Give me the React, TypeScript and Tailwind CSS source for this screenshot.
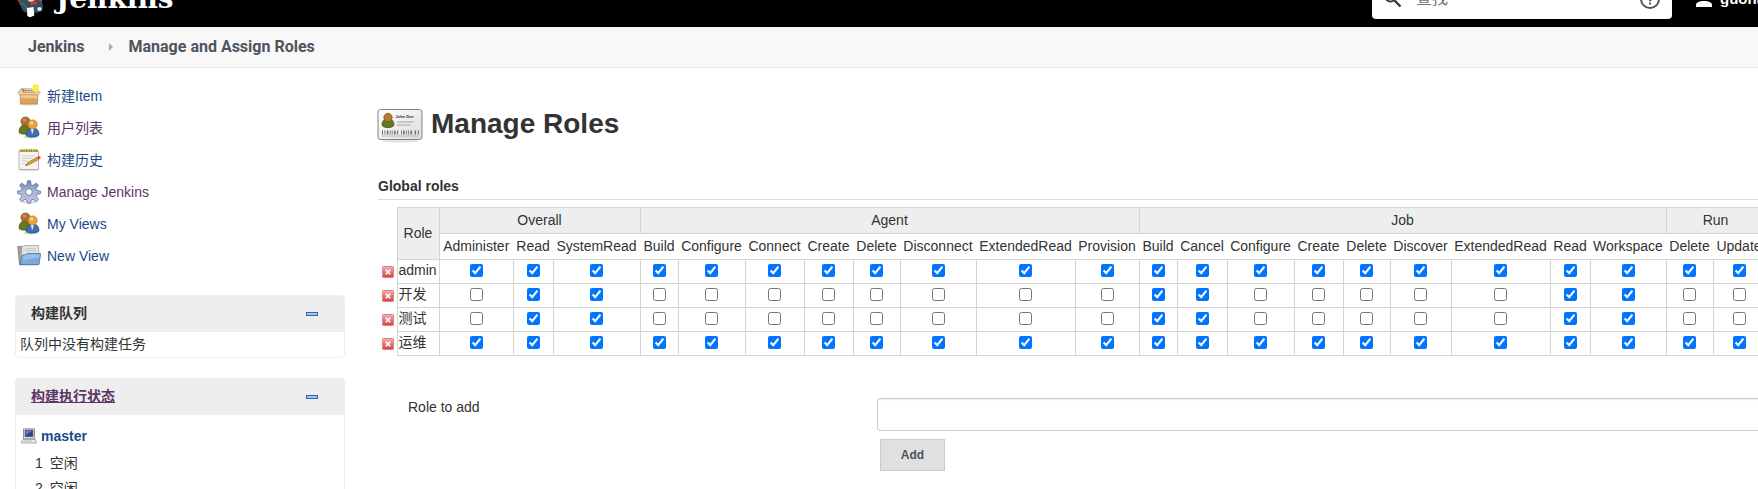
import { useId, useState, type ReactNode } from "react";

const groups = [
  { name: "Overall", permissions: ["Administer", "Read", "SystemRead"] },
  {
    name: "Agent",
    permissions: ["Build", "Configure", "Connect", "Create", "Delete", "Disconnect", "ExtendedRead", "Provision"],
  },
  {
    name: "Job",
    permissions: ["Build", "Cancel", "Configure", "Create", "Delete", "Discover", "ExtendedRead", "Read", "Workspace"],
  },
  { name: "Run", permissions: ["Delete", "Update"] },
];

const columnWidths: Record<string, string> = {
  Administer: "w-[74px]",
  Read: "w-[40px]",
  SystemRead: "w-[87px]",
  Build: "w-[38px]",
  Configure: "w-[67px]",
  Connect: "w-[59px]",
  Create: "w-[49px]",
  Delete: "w-[47px]",
  Disconnect: "w-[76px]",
  ExtendedRead: "w-[99px]",
  Provision: "w-[64px]",
  Cancel: "w-[50px]",
  Discover: "w-[61px]",
  Workspace: "w-[76px]",
  Update: "w-[52px]",
};

const permissions = groups.flatMap((g) => g.permissions.map((p) => `${g.name}/${p}`));
const developer = ["Overall/Read", "Overall/SystemRead", "Job/Build", "Job/Cancel", "Job/Read", "Job/Workspace"];

const initialRoles: { name: string; granted: string[] }[] = [
  { name: "admin", granted: permissions },
  { name: "开发", granted: developer },
  { name: "测试", granted: developer },
  { name: "运维", granted: permissions },
];

function BoxIcon() {
  return (
    <svg viewBox="0 0 24 24" className="size-6" aria-hidden="true">
      <ellipse cx="12" cy="20.500" rx="10" ry="1.200" fill="#ddd" />
      <path d="M4.500 4.500h15L21 10H3z" fill="#b98242" />
      <path d="M7.500 5h10v3h-10z" fill="#d9d5cc" />
      <path d="M8 6.500h9" stroke="#777" strokeWidth="1" strokeDasharray="2 1" />
      <path d="M3 10h18l-.5 10h-17z" fill="#dba45c" stroke="#bb8643" strokeWidth=".7" />
      <path d="M3.500 10.300h17l-.2 4H3.700z" fill="#edc88f" />
      <path d="M4.500 4.500.8 8.500 3 10.800h18l2.300-2.300-3.800-4L18 8.300H6.500z" fill="#f0cf9b" stroke="#bb8643" strokeWidth=".6" />
      <circle cx="18.500" cy="3.800" r="3.800" fill="#fdf58a" />
      <circle cx="18.500" cy="3.800" r="2.500" fill="#fbe611" />
      <circle cx="18.500" cy="3.800" r="1.100" fill="#fffbd0" />
    </svg>
  );
}

function PeopleIcon() {
  return (
    <svg viewBox="0 0 24 24" className="size-6" aria-hidden="true">
      <ellipse cx="14" cy="21" rx="8" ry="1.300" fill="#ddd" />
      <path d="M2 16.500c0-5 2-7.500 6-7.500s6 2.500 6 7c-2 2.500-10 3-12 .5z" fill="#65791f" stroke="#47560f" strokeWidth=".7" />
      <circle cx="8.500" cy="5.500" r="4.500" fill="#a86f28" stroke="#76501c" strokeWidth=".7" />
      <circle cx="7.500" cy="4" r="1.800" fill="#c99450" />
      <path d="M9 19.500c0-5 2-7.500 6.500-7.500s6.500 2.500 6.500 7c-2 2.500-11 3-13 .5z" fill="#3c6eb0" stroke="#224b86" strokeWidth=".7" />
      <path d="m13.500 12 1.800 6.500L17 12z" fill="#f4f4f4" />
      <circle cx="15.500" cy="8.500" r="4.600" fill="#eda238" stroke="#b87414" strokeWidth=".7" />
      <circle cx="14.500" cy="7" r="2" fill="#f8cb80" />
    </svg>
  );
}

function NotepadIcon() {
  return (
    <svg viewBox="0 0 24 24" className="size-6" aria-hidden="true">
      <ellipse cx="12" cy="22" rx="10" ry="1.300" fill="#ddd" />
      <path d="M2 3h19.500v18.500H2z" fill="#f4f4f2" stroke="#a9a9a5" strokeWidth=".9" />
      <path d="M2.500 1.500h18.500v2.500H2.500z" fill="#c2b44a" />
      <path d="M4.500 1v3M7 1v3M9.500 1v3M12 1v3M14.500 1v3M17 1v3M19.500 1v3" stroke="#7d712a" strokeWidth=".7" />
      <path d="M5 8h12M5 10.500h10M5 13h6M5 15.500h3" stroke="#cbcbcb" strokeWidth="1" />
      <path d="m8.500 17.500 2.500-3L20.500 9l1.300 2.200-9.600 5.400z" fill="#dfa244" stroke="#8d6123" strokeWidth=".7" />
      <path d="m20.300 9 1.500-.9q2 .3 2 2.200l-2 1z" fill="#e0442f" />
      <path d="m8.500 17.500 1-1.300.8.800z" fill="#222" />
    </svg>
  );
}

function GearIcon() {
  return (
    <svg viewBox="0 0 24 24" className="size-6" aria-hidden="true">
      <defs>
        <linearGradient id="gear" x1="0" y1="0" x2="0" y2="1">
          <stop offset="0" stopColor="#6d80ae" />
          <stop offset=".45" stopColor="#aab5d4" />
          <stop offset="1" stopColor="#c4c2e4" />
        </linearGradient>
      </defs>
      <ellipse cx="12" cy="22" rx="8" ry="1.500" fill="#ddd" />
      <path
        fillRule="evenodd"
        fill="url(#gear)"
        stroke="#6673a0"
        strokeWidth=".8"
        strokeLinejoin="round"
        d="M10.500.8h3l.6 3.900 2 .8 3.200-2.400 2.200 2.200-2.400 3.200.8 2 3.600.6v2.600l-3.600.6-.8 2 2.400 3.200-2.200 2.200-3.200-2.400-2 .8-.6 3.100h-3l-.6-3.100-2-.8-3.200 2.400-2.200-2.200 2.400-3.200-.8-2-3.600-.6v-2.600l3.600-.6.8-2-2.400-3.200 2.200-2.200 3.200 2.400 2-.8zM12 8.700a3.300 3.300 0 1 0 0 6.600 3.300 3.300 0 0 0 0-6.600z"
      />
    </svg>
  );
}

function FolderIcon() {
  return (
    <svg viewBox="0 0 24 24" className="size-6" aria-hidden="true">
      <ellipse cx="12" cy="21" rx="10" ry="1.200" fill="#ddd" />
      <path d="M.8 2.500h5L7 4v16.500H2.500z" fill="#a2a2a2" stroke="#6f6f6f" strokeWidth=".7" />
      <path d="M4.800 2.500 8 1.500h13.700V18H4z" fill="#e2e2e2" stroke="#9b9b9b" strokeWidth=".7" />
      <path d="M9 4.500h10M8 6.500h11" stroke="#c6c6c6" strokeWidth=".9" />
      <path d="m5.500 11 3.500-.3 1-1.200h13.700L22 20.500H2.800z" fill="#7fa9dc" stroke="#4672aa" strokeWidth=".8" />
      <path d="M6.200 11.700 9.500 11.300l1-1H22.500l-.5 3.500c-6 0-9 2-16.800 2z" fill="#9bbde8" />
    </svg>
  );
}

function ComputerIcon() {
  return (
    <svg viewBox="0 0 16 16" className="size-4" aria-hidden="true">
      <path d="M2.500.8h11v10h-11z" fill="#deded8" stroke="#888" strokeWidth=".9" />
      <path d="M4.200 2.300h7.600v6.200H4.200z" fill="#2d4a86" stroke="#1b2d58" strokeWidth=".6" />
      <path d="M4.700 2.800h6.500L4.700 7z" fill="#6682b8" />
      <path d="M1.500 11.500h13l1 3.500H.5z" fill="#e9e9e4" stroke="#999" strokeWidth=".8" />
      <path d="M3 13h8" stroke="#aaa" strokeWidth=".8" />
    </svg>
  );
}

function CardIcon() {
  return (
    <svg viewBox="0 0 48 48" className="size-12" aria-hidden="true">
      <defs>
        <linearGradient id="card" x1="0" y1="0" x2="1" y2="1">
          <stop offset="0" stopColor="#fff" />
          <stop offset="1" stopColor="#dcdcdc" />
        </linearGradient>
      </defs>
      <ellipse cx="24" cy="38.500" rx="18" ry="2" fill="#e2e2e2" />
      <rect x="2" y="7.500" width="44" height="30" rx="2.500" fill="url(#card)" stroke="#858585" />
      <path d="M6 23c0-4 2-6 6-6s6 2 6 6c-1 3.500-11 3.500-12 0z" fill="#64781f" stroke="#414f10" strokeWidth=".7" />
      <circle cx="12" cy="15.500" r="4.200" fill="#b57b33" stroke="#7b521c" strokeWidth=".7" />
      <text x="19.500" y="16" fontSize="4" fontWeight="700" fill="#333" fontFamily="Liberation Sans, sans-serif">John Doe</text>
      <path d="M21 20h17M21 23h13.500" stroke="#bcbcbc" strokeWidth="1.600" />
      <path d="M6 30.500h1m1.500 0h.8m1.500 0h1.500m1.500 0h.8m1.200 0h.8m1.500 0h1.500m1.500 0h1m3 0h.8m1.200 0h1.500m1.500 0h.8m1.200 0h.8m1.500 0h1.500m2.700 0h1.300m1.900 0h1" stroke="#666" strokeWidth="4" />
      <path d="M6 34h36" stroke="#999" strokeWidth=".9" strokeDasharray="1.500 .8" />
    </svg>
  );
}

function JenkinsLogo() {
  return (
    <svg viewBox="0 0 30 40" className="h-10 w-[30px]" aria-hidden="true">
      <circle cx="14" cy="17" r="13" fill="#d33833" />
      <path d="M5 14C5 6 9 2 14 2s9 5 9 12c0 5-3 8-8 9-6 0-10-3-10-9z" fill="#f0d6b7" />
      <path d="M3.500 21c2-2 5-2 8 0l3.500 3 5-4 6 3c1.500 3 1 6 0 9-3 1.500-5 1.500-8 2-5 0-8 0-11-2-2-3-3.500-7-3.500-11z" fill="#335061" />
      <path d="m14 22 3 1.500 3.500-2 .5 4-3-.5-3 1.500z" fill="#d33833" />
      <path d="M5 24c3 1 5 3 6 6" fill="none" stroke="#6d8793" strokeWidth=".8" />
      <path d="m11 29 6.500-1 .8 8.500-4.300 1.700-2.700-1.200z" fill="#fff" />
      <path d="M21 28.500c3-1.500 5-.5 5 1.500s-2.500 3-5 1.500z" fill="#e7e7e5" stroke="#1e2d36" strokeWidth=".6" />
    </svg>
  );
}

function DeleteIcon() {
  return (
    <svg viewBox="0 0 12 12" className="size-3" aria-hidden="true">
      <defs>
        <linearGradient id="delete" x1="0" y1="0" x2="0" y2="1">
          <stop offset="0" stopColor="#edb4b4" />
          <stop offset="1" stopColor="#d94040" />
        </linearGradient>
      </defs>
      <rect x=".5" y=".5" width="11" height="11" rx=".8" fill="url(#delete)" stroke="#dc8484" />
      <path d="m3.800 3.800 4.400 4.400m0-4.400L3.800 8.200" stroke="#fff" strokeWidth="1.600" />
    </svg>
  );
}

const tasks = [
  { label: "新建Item", icon: <BoxIcon />, color: "text-[#204a87]" },
  { label: "用户列表", icon: <PeopleIcon />, color: "text-[#5c3566]" },
  { label: "构建历史", icon: <NotepadIcon />, color: "text-[#204a87]" },
  { label: "Manage Jenkins", icon: <GearIcon />, color: "text-[#5c3566]" },
  { label: "My Views", icon: <PeopleIcon />, color: "text-[#204a87]" },
  { label: "New View", icon: <FolderIcon />, color: "text-[#204a87]" },
];

function Header() {
  return (
    <header className="flex h-[27px] items-end overflow-hidden bg-black">
      <div className="flex h-14 w-full shrink-0 items-center">
        <a href="#home" className="ml-4 flex items-center gap-2.5 text-white">
          <JenkinsLogo />
          <span className="font-['DejaVu_Serif',serif] text-[28px] leading-8 font-bold">Jenkins</span>
        </a>
        <label className="ml-auto flex h-10 w-[300px] items-center rounded bg-white px-3">
          <svg viewBox="0 0 18 18" className="size-[18px]" fill="none" stroke="#333" strokeWidth="2" aria-hidden="true">
            <circle cx="6.500" cy="6.500" r="5" />
            <path d="m10.500 10.500 6 6" strokeWidth="2.300" />
          </svg>
          <input aria-label="查找" placeholder="查找" className="ml-3.5 min-w-0 flex-1 text-base outline-none placeholder:text-[#757575]" />
          <svg viewBox="0 0 20 20" className="size-5" fill="none" stroke="#4d545d" strokeWidth="2" aria-hidden="true">
            <circle cx="10" cy="10" r="9" />
            <path d="M7.300 8a2.700 2.700 0 1 1 3.700 2.500q-1 .6-1 1.700M10 13.500v2" />
          </svg>
        </label>
        <a href="#user" className="ml-6 flex w-[62px] shrink-0 items-center gap-2 overflow-hidden text-[15px] font-bold text-white">
          <svg viewBox="0 0 16 16" className="size-4 shrink-0" fill="#fff" aria-hidden="true">
            <circle cx="8" cy="4" r="4" />
            <path d="M0 16v-2c0-3 4-4 8-4s8 1 8 4v2z" />
          </svg>
          guoha
        </a>
      </div>
    </header>
  );
}

function Pane({ title, children }: { title: ReactNode; children: ReactNode }) {
  const [open, setOpen] = useState(true);
  return (
    <section className="mb-5 overflow-hidden rounded border border-[#eee]">
      <div className="flex h-9 items-center justify-between bg-[#eee] pr-[26px] pl-[15px]">
        <h2 className="pb-0.5 font-bold">{title}</h2>
        <button type="button" aria-label="collapse" onClick={() => setOpen(!open)}>
          <svg viewBox="0 0 12 4" className="h-1 w-3" aria-hidden="true">
            <rect x=".5" y=".5" width="11" height="3" fill="#a5c4ea" stroke="#3465a4" />
          </svg>
        </button>
      </div>
      {open && children}
    </section>
  );
}

function RolesTable() {
  const [roles, setRoles] = useState(initialRoles);
  const toggle = (role: string, permission: string) =>
    setRoles(
      roles.map((r) =>
        r.name !== role
          ? r
          : {
              ...r,
              granted: r.granted.includes(permission)
                ? r.granted.filter((p) => p !== permission)
                : [...r.granted, permission],
            },
      ),
    );
  return (
    <table className="mt-[7px] min-w-max border-collapse whitespace-nowrap">
      <colgroup>
        <col className="w-[19px]" />
        <col className="w-[42px]" />
        {permissions.map((p) => (
          <col key={p} className={columnWidths[p.split("/")[1]]} />
        ))}
      </colgroup>
      <thead>
        <tr className="h-[26px]">
          <td rowSpan={2} className="p-0" />
          <th rowSpan={2} scope="col" className="border border-[#d3d7cf] bg-[#eee] p-0 pb-0.5 font-normal">Role</th>
          {groups.map((g) => (
            <th key={g.name} colSpan={g.permissions.length} scope="colgroup" className="border border-[#d3d7cf] bg-[#eee] p-0 pb-0.5 font-normal">
              {g.name}
            </th>
          ))}
        </tr>
        <tr className="h-[26px]">
          {permissions.map((p) => (
            <th key={p} scope="col" className="p-0 pb-0.5 font-normal">{p.split("/")[1]}</th>
          ))}
        </tr>
      </thead>
      <tbody>
        {roles.map((role) => (
          <tr key={role.name} className="h-6">
            <td className="py-0 pr-0.5 pl-1">
              <button type="button" aria-label={`Delete ${role.name}`} className="block" onClick={() => setRoles(roles.filter((r) => r !== role))}>
                <DeleteIcon />
              </button>
            </td>
            <th scope="row" className="border border-[#d3d7cf] p-px pt-0 pb-[3px] text-left font-normal">{role.name}</th>
            {permissions.map((p) => (
              <td key={p} className="border border-[#d3d7cf] p-0 pb-0.5">
                <input
                  type="checkbox"
                  aria-label={`${role.name} ${p}`}
                  checked={role.granted.includes(p)}
                  onChange={() => toggle(role.name, p)}
                  className="mx-auto block size-[13px]"
                />
              </td>
            ))}
          </tr>
        ))}
      </tbody>
    </table>
  );
}

export default function App() {
  const roleId = useId();
  return (
    <div className="h-screen overflow-hidden bg-white font-['Liberation_Sans','Noto_Sans_CJK_SC',sans-serif] text-sm leading-5 text-[#333]">
      <Header />
      <nav className="flex h-[41px] items-center border-b border-[#e6e6e6] bg-[#f8f8f8] pl-7 font-[Roboto,sans-serif] text-base font-bold text-[#4d545d]">
        <a href="#jenkins">Jenkins</a>
        <svg viewBox="0 0 4 8" className="mr-4 ml-6 h-2 w-1" fill="#aaa" aria-hidden="true">
          <path d="M0 0l4 4-4 4z" />
        </svg>
        <a href="#roles">Manage and Assign Roles</a>
      </nav>
      <div className="flex">
        <aside className="w-[345px] shrink-0 pt-3 pl-[15px]">
          <ul className="mb-[23px]">
            {tasks.map((t) => (
              <li key={t.label} className="flex h-8 items-center gap-1.5 pl-0.5">
                {t.icon}
                <a href="#task" className={t.color}>{t.label}</a>
              </li>
            ))}
          </ul>
          <Pane title="构建队列">
            <p className="px-1 pt-0.5 pb-[3px]">队列中没有构建任务</p>
          </Pane>
          <Pane title={<a href="#computer" className="text-[#5c3566] underline">构建执行状态</a>}>
            <a href="#master" className="mt-[11px] flex items-center gap-1 px-[5px] font-bold text-[#204a87]">
              <ComputerIcon />
              master
            </a>
            <ol className="pt-1 pl-[19px]">
              {[1, 2].map((n) => (
                <li key={n} className="flex h-[25px] items-center gap-[7px]">
                  <span>{n}</span>
                  <span>空闲</span>
                </li>
              ))}
            </ol>
          </Pane>
        </aside>
        <main className="min-w-0 flex-1 overflow-hidden pt-[34px] pl-[33px]">
          <div className="-ml-0.5 flex items-center gap-[7px]">
            <CardIcon />
            <h1 className="pb-1 text-[28px] leading-9 font-bold">Manage Roles</h1>
          </div>
          <h2 className="mt-[26px] border-b border-[#ddd] pb-[3px] font-bold">Global roles</h2>
          <RolesTable />
          <form className="mt-[42px] flex pl-[30px]" onSubmit={(e) => e.preventDefault()}>
            <label htmlFor={roleId} className="w-[469px] shrink-0 leading-[18px]">Role to add</label>
            <div className="min-w-0 flex-1">
              <input id={roleId} className="-mr-2 block h-[33px] w-[calc(100%+8px)] rounded-[3px] border border-[#ccc] px-2 shadow-[inset_0_1px_1px_rgba(0,0,0,0.08)]" />
              <button type="submit" className="mt-2 ml-[3px] h-8 w-[65px] border border-[#ccc] bg-[#e0e0e0] text-xs font-bold text-[#4d545d]">Add</button>
            </div>
          </form>
        </main>
      </div>
    </div>
  );
}
